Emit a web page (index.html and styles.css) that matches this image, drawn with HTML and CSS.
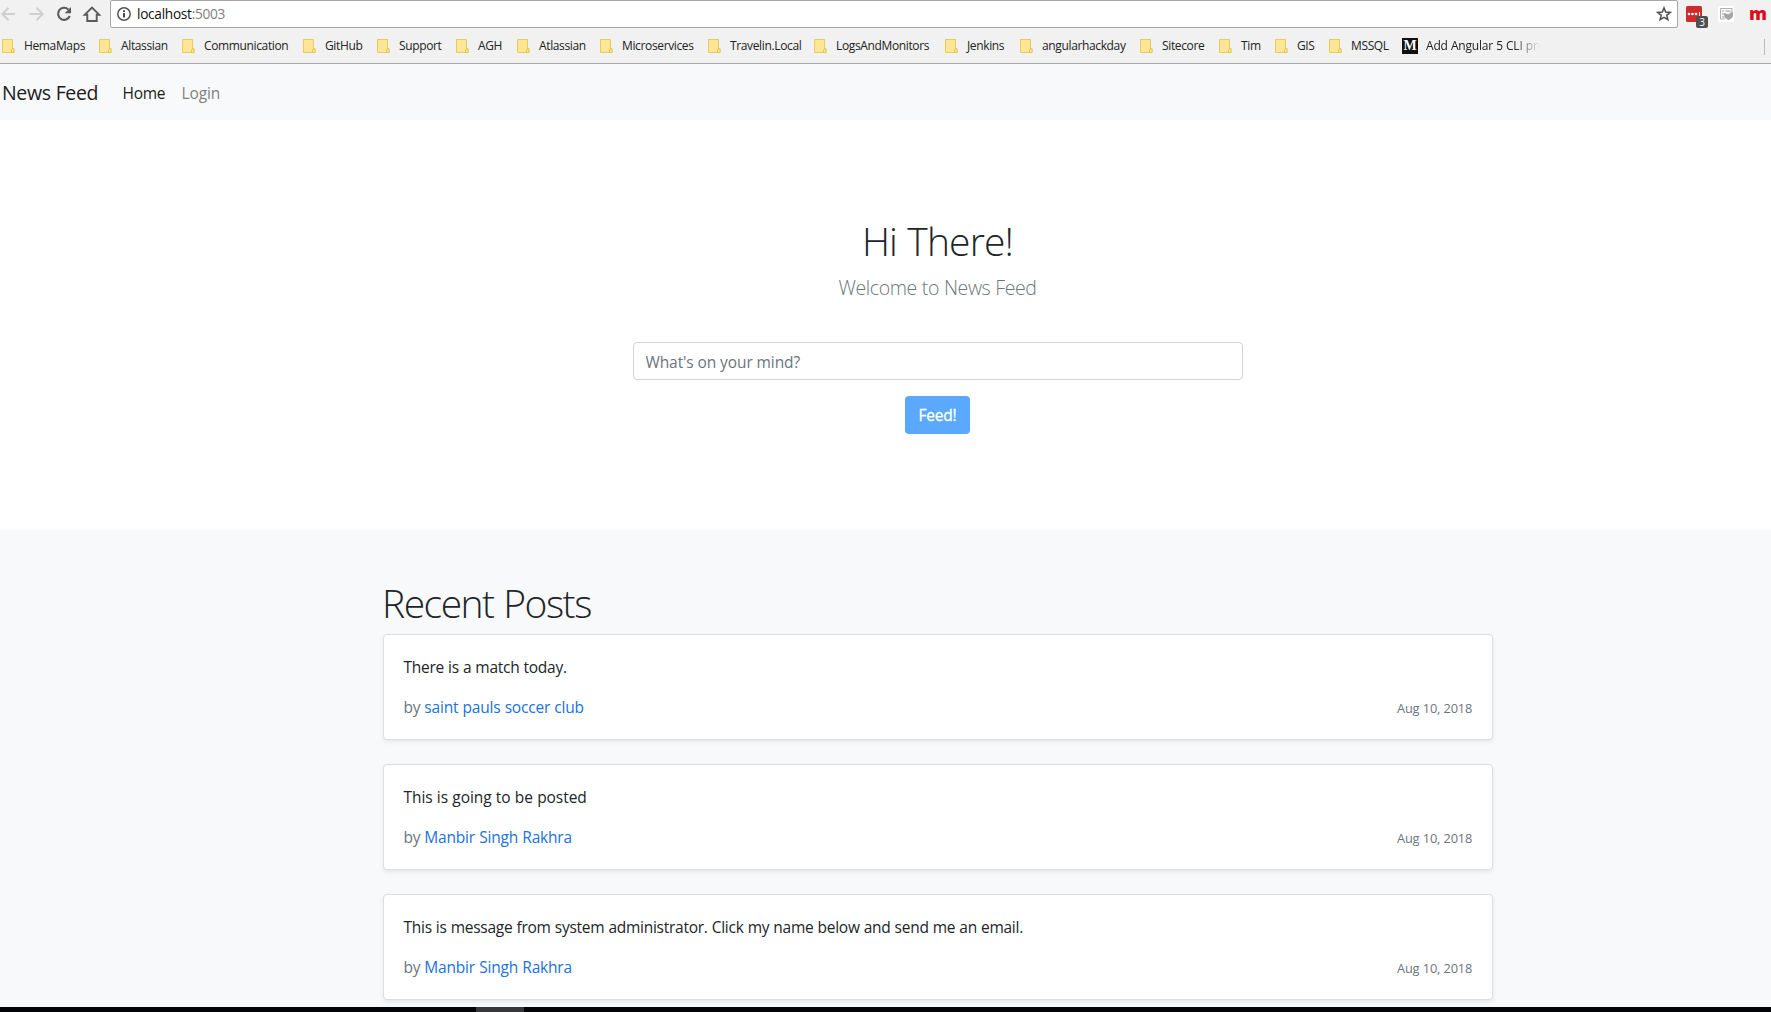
FILE: index.html
```
<!DOCTYPE html>
<html lang="en">
<head>
<meta charset="utf-8">
<title>News Feed</title>
<link rel="stylesheet" href="styles.css">
</head>
<body>
<svg class="defs" width="0" height="0">
  <symbol id="folder" viewBox="0 0 13 15">
    <path d="M.5.5H10.5V10L12 10.5V13.500H.5Z" fill="#ffe694" stroke="#e8cb5e"/>
    <path d="M9.500 13.500V10.500L12 9.500V13.500Z" fill="#ffe694" stroke="#dfbf48" stroke-width=".8"/>
  </symbol>
</svg>
<header class="browser">
  <div class="toolbar">
    <svg class="nav-icons" width="110" height="28" viewBox="0 0 110 28" fill="none">
      <g stroke="#cfcfcf" stroke-width="2"><path d="M15 14H3M8.500 7.800L2.300 14L8.500 20.200"/><path d="M29.500 14H42M36.500 7.800L42.700 14L36.500 20.200"/></g>
      <path d="M68.300 9.500A6 6 0 1 0 69.700 16" stroke="#5a5a5a" stroke-width="2.100"/>
      <path d="M71 7V13.300H64.700Z" fill="#5a5a5a"/>
      <path d="M84.800 14.700L92 7.500L99.200 14.700H96.700V21H87.300V14.700Z" stroke="#5a5a5a" stroke-width="1.900"/>
    </svg>
    <div class="address">
      <svg width="16" height="16" viewBox="0 0 16 16"><circle cx="7" cy="8" r="6.200" fill="none" stroke="#555" stroke-width="1.500"/><path d="M7 7V11.500M7 4.300V6" stroke="#444" stroke-width="1.900"/></svg>
      <span class="url">localhost<span class="port">:5003</span></span>
      <svg class="star" width="16" height="16" viewBox="0 0 16 16"><path d="M8 1.900L9.700 6.100L14.200 6.400L10.700 9.300L11.900 13.700L8 11.300L4.100 13.700L5.300 9.300L1.800 6.400L6.300 6.100Z" fill="none" stroke="#505050" stroke-width="1.500"/></svg>
    </div>
    <div class="extensions">
      <div class="ext-pass">
        <svg width="16" height="16" viewBox="0 0 16 16"><rect width="16" height="16" rx="1.500" fill="#d02a2a"/><g fill="#fff"><circle cx="3" cy="8" r="1.300"/><circle cx="6.500" cy="8" r="1.300"/><circle cx="10" cy="8" r="1.300"/><rect x="13" y="6" width="1" height="4"/></g></svg>
        <span class="badge">3</span>
      </div>
      <svg class="ext-shield" width="16" height="16" viewBox="0 0 16 16"><rect width="16" height="16" rx="1.500" fill="#fff"/><path d="M14 6V2.500H2.500V13H7" fill="none" stroke="#b0b0b0"/><path d="M4 5H6M7.500 5H12.500M4 8H6M4 11H6" stroke="#b8b8b8" stroke-width="1.500"/><path d="M10.500 8.200L14 5.500L15 7V10C14.500 12 12.500 13 10.500 14.300C8.500 13 6 12 6 9V7Z" fill="#a6a6a6"/></svg>
      <span class="ext-m">m</span>
    </div>
  </div>
  <nav class="bookmarks">
    <a><svg><use href="#folder"/></svg>HemaMaps</a>
    <a><svg><use href="#folder"/></svg>Altassian</a>
    <a><svg><use href="#folder"/></svg>Communication</a>
    <a><svg><use href="#folder"/></svg>GitHub</a>
    <a><svg><use href="#folder"/></svg>Support</a>
    <a><svg><use href="#folder"/></svg>AGH</a>
    <a><svg><use href="#folder"/></svg>Atlassian</a>
    <a><svg><use href="#folder"/></svg>Microservices</a>
    <a><svg><use href="#folder"/></svg>Travelin.Local</a>
    <a><svg><use href="#folder"/></svg>LogsAndMonitors</a>
    <a><svg><use href="#folder"/></svg>Jenkins</a>
    <a><svg><use href="#folder"/></svg>angularhackday</a>
    <a><svg><use href="#folder"/></svg>Sitecore</a>
    <a><svg><use href="#folder"/></svg>Tim</a>
    <a><svg><use href="#folder"/></svg>GIS</a>
    <a><svg><use href="#folder"/></svg>MSSQL</a>
    <a><span class="medium-logo">M</span><span class="fade">Add Angular 5 CLI pro</span></a>
    <i class="divider"></i>
  </nav>
</header>
<nav class="navbar">
  <a class="brand">News Feed</a>
  <a class="nav-link active">Home</a>
  <a class="nav-link">Login</a>
</nav>
<section class="hero">
  <h1>Hi There!</h1>
  <p class="lead">Welcome to News Feed</p>
  <input class="feed-input" type="text" placeholder="What's on your mind?">
  <button class="feed-button">Feed!</button>
</section>
<main class="posts">
  <h1 class="posts-title">Recent Posts</h1>
  <article class="card">
    <p>There is a match today.</p>
    <footer><span>by <a>saint pauls soccer club</a></span><small>Aug 10, 2018</small></footer>
  </article>
  <article class="card">
    <p class="wide">This is going to be posted</p>
    <footer><span>by <a>Manbir Singh Rakhra</a></span><small>Aug 10, 2018</small></footer>
  </article>
  <article class="card">
    <p>This is message from system administrator. Click my name below and send me an email.</p>
    <footer><span>by <a>Manbir Singh Rakhra</a></span><small>Aug 10, 2018</small></footer>
  </article>
</main>
<div class="taskbar"><i></i></div>
</body>
</html>
```
FILE: styles.css
```
* { box-sizing: border-box; }
body {
  margin: 0;
  height: 1012px;
  overflow: hidden;
  display: flex;
  flex-direction: column;
  font: 400 15.5px/24px "Open Sans", "Noto Sans", sans-serif;
  letter-spacing: -.26px;
  word-spacing: .3px;
  color: #212529;
  background: #fff;
}
h1, p { margin: 0; }
.defs { position: absolute; }

.browser { flex: none; height: 64px; background: #f1f1f1; border-bottom: 1px solid #a9a9a9; }
.toolbar { display: flex; height: 28px; }
.nav-icons { flex: none; }
.address {
  width: 1568px;
  height: 28px;
  display: flex;
  align-items: center;
  padding: 0 5px 0 6px;
  background: #fff;
  border: 1px solid #a6a6a6;
  border-radius: 2px;
}
.url { margin-left: 4px; font-size: 13.7px; letter-spacing: -.3px; color: #111; }
.port { color: #808080; }
.star { margin-left: auto; }
.extensions { display: flex; padding: 6px 0 0 8px; }
.ext-pass { position: relative; width: 32px; }
.ext-pass svg { display: block; }
.badge {
  position: absolute;
  left: 10px;
  top: 10px;
  width: 12px;
  height: 12px;
  border-radius: 2px;
  background: #505050;
  color: #fff;
  font: 10px/12px "Open Sans", sans-serif;
  text-align: center;
}
.ext-m { margin: -5px 0 0 15px; font: 800 18px/24px "Open Sans", sans-serif; color: #d9101c; }

.bookmarks {
  display: grid;
  grid-template-columns: 97px 83px 121px 74px 79px 61px 83px 108px 106px 131px 75px 120px 79px 56px 54px 73px 1fr 7px;
  height: 35px;
  padding-left: 2px;
  font-size: 12px;
  letter-spacing: -.36px;
  line-height: 36px;
  color: #222;
}
.bookmarks a { display: flex; align-items: center; white-space: nowrap; }
.bookmarks svg { width: 13px; height: 15px; margin-right: 9px; flex: none; }
.medium-logo {
  width: 16px;
  height: 16px;
  margin-right: 8px;
  background: #111;
  color: #fff;
  font: 700 14px/16px "Liberation Serif", serif;
  text-align: center;
  letter-spacing: 0;
}
.fade {
  width: 120px;
  letter-spacing: -.2px;
  -webkit-mask-image: linear-gradient(90deg, #000 88px, transparent 114px);
  mask-image: linear-gradient(90deg, #000 88px, transparent 114px);
}
.divider { width: 1px; height: 16px; margin-top: 11px; background: #bbb; }

.navbar {
  flex: none;
  height: 56px;
  display: flex;
  align-items: center;
  padding: 2px 0 0 2px;
  background: #f8f9fa;
}
.brand { width: 120.5px; font-size: 19.5px; letter-spacing: -.35px; color: #1c1c1c; }
.nav-link { width: 59px; color: #808182; letter-spacing: -.1px; }
.nav-link.active { color: #1c1c1c; letter-spacing: -.3px; }

.hero {
  flex: none;
  height: 410px;
  padding: 97px 0 0 104px;
  display: flex;
  flex-direction: column;
  align-items: center;
}
.hero h1, .posts-title { font-weight: 300; font-size: 39px; line-height: 48px; }
.hero h1 { letter-spacing: -.85px; word-spacing: 1px; }
.lead { margin-top: 8px; font-size: 19.5px; font-weight: 300; line-height: 30px; letter-spacing: -.4px; color: #6c757d; }
.feed-input {
  width: 610px;
  height: 38px;
  margin-top: 39px;
  padding: 2px 12px 0;
  border: 1px solid #ced4da;
  border-radius: 4px;
  font: inherit;
  letter-spacing: -.1px;
}
.feed-input::placeholder { color: #6c757d; opacity: 1; }
.feed-button {
  width: 65px;
  height: 38px;
  margin-top: 16px;
  padding: 0;
  border: 0;
  border-radius: 4px;
  background: #5aa9ff;
  color: #fff;
  font: inherit;
  letter-spacing: -.2px;
  -webkit-text-stroke: .3px #fff;
}

.posts { flex: 1; padding: 48px 278px 0 383px; background: #f8f9fa; }
.posts-title { margin: 0 0 8px -1px; height: 48px; line-height: 49px; letter-spacing: -1.5px; word-spacing: 1px; }
.card {
  height: 106px;
  margin-bottom: 24px;
  padding: 20px 20px 0 19.5px;
  background: #fff;
  border: 1px solid #dcdfe2;
  border-radius: 4px;
  box-shadow: 0 2px 4px rgba(0, 0, 0, .075);
}
.card p { margin-bottom: 16px; }
.card .wide { letter-spacing: -.06px; }
.card footer { display: flex; justify-content: space-between; color: #6c757d; }
.card a { color: #2072dd; letter-spacing: -.18px; }
.card small { font-size: 12.8px; letter-spacing: -.2px; padding-top: 1px; }

.taskbar { position: absolute; left: 0; right: 0; top: 1007px; height: 5px; background: #020408; }
.taskbar i { display: block; width: 48px; height: 5px; margin-left: 476px; background: #35373a; }
```
